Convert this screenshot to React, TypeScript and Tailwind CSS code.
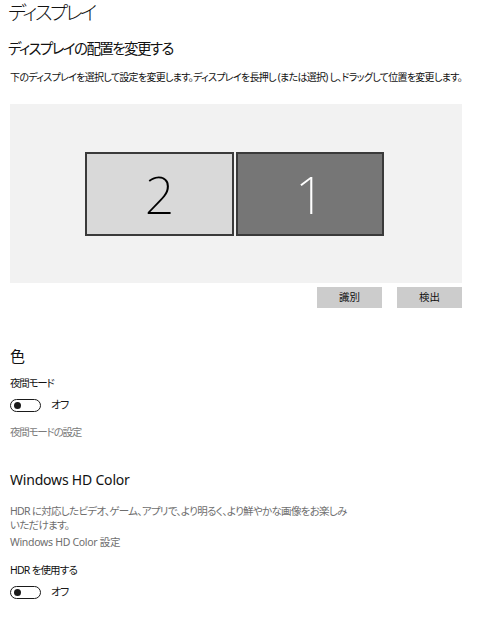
import React from "react";

function Toggle() {
  return (
    <div className="flex items-center mt-[4px] h-[20px]">
      <div className="w-[31px] h-[13px] rounded-full border-[1.5px] border-[#1a1a1a] flex items-center pl-[2.5px] box-border">
        <div className="w-[7px] h-[7px] rounded-full bg-[#1a1a1a]" />
      </div>
      <span className="ml-[10px] text-[11px] leading-[16px] text-[#1a1a1a] tracking-[-1px]">オフ</span>
    </div>
  );
}

export default function App() {
  return (
    <div
      className="w-[496px] h-[620px] bg-white overflow-hidden pl-[10px] text-[#111] [font-feature-settings:'palt'] font-['Noto_Sans','Noto_Sans_CJK_JP',sans-serif]"
    >
      <h1 className="text-[19.5px] leading-[26px] font-light -ml-[2px] tracking-[-2.5px]">ディスプレイ</h1>
      <h2 className="mt-[12px] text-[14.5px] leading-[20px] -ml-[2px] tracking-[-1.6px]">ディスプレイの配置を変更する</h2>
      <p className="mt-[12px] text-[10px] leading-[14px] whitespace-nowrap tracking-[-0.7px]">
        下のディスプレイを選択して設定を変更します。ディスプレイを長押し (または選択) し、ドラッグして位置を変更します。
      </p>
      <div className="mt-[20px] w-[452px] h-[179px] bg-[#f2f2f2] flex items-center justify-center gap-[2px] pr-[3px]">
        <div className="w-[149px] h-[84px] bg-[#d9d9d9] border-2 border-[#3a3a3a] flex items-center justify-center">
          <span className="text-[52px] leading-none font-extralight text-black font-['Noto_Sans',sans-serif]">2</span>
        </div>
        <div className="w-[148px] h-[84px] bg-[#767676] border-2 border-[#3a3a3a] flex items-center justify-center">
          <span className="text-[52px] leading-none font-extralight text-white font-['Noto_Sans',sans-serif]">1</span>
        </div>
      </div>
      <div className="mt-[4px] w-[452px] flex justify-end gap-[15px]">
        <button className="w-[65px] h-[21px] bg-[#cccccc] text-[10.5px] leading-[21px] text-[#111]">識別</button>
        <button className="w-[65px] h-[21px] bg-[#cccccc] text-[10.5px] leading-[21px] text-[#111]">検出</button>
      </div>
      <h2 className="mt-[38px] text-[15px] leading-[20px]">色</h2>
      <div className="mt-[9px] text-[10.5px] leading-[16px] tracking-[-1.2px]">夜間モード</div>
      <Toggle />
      <div className="mt-[9px] text-[10.5px] leading-[16px] text-[#7a7a7a] tracking-[-1.2px]">夜間モードの設定</div>
      <h2 className="mt-[30px] text-[14px] leading-[20px] tracking-[-0.2px]">Windows HD Color</h2>
      <p className="mt-[15px] w-[341px] text-[10.5px] leading-[13.5px] text-[#6e6e6e] tracking-[-0.7px]">
        HDR に対応したビデオ、ゲーム、アプリで、より明るく、より鮮やかな画像をお楽しみいただけます。
      </p>
      <div className="mt-[2px] text-[10.5px] leading-[16px] text-[#6e6e6e] tracking-[-0.3px]">Windows HD Color 設定</div>
      <div className="mt-[12px] text-[10.5px] leading-[16px] tracking-[-0.8px]">HDR を使用する</div>
      <Toggle />
    </div>
  );
}
